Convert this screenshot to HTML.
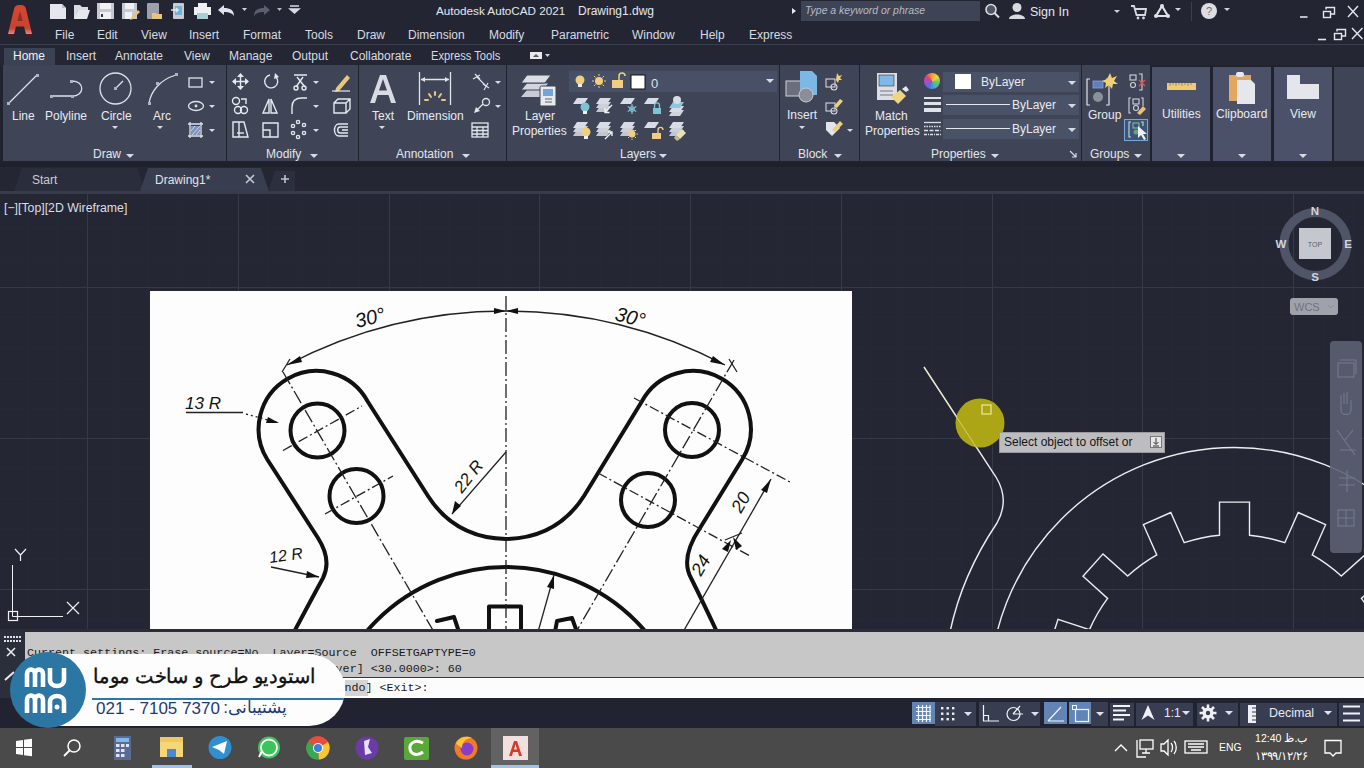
<!DOCTYPE html>
<html><head><meta charset="utf-8">
<style>
*{margin:0;padding:0;box-sizing:border-box}
html,body{width:1364px;height:768px;overflow:hidden;background:#242733;font-family:"Liberation Sans",sans-serif;color:#e6e8ee}
.a{position:absolute}
.t{position:absolute;white-space:pre;line-height:1}
#title{left:0;top:0;width:1364px;height:45px;background:#232632}
#tabs{left:0;top:45px;width:1364px;height:20px;background:#242733}
#ribbon{left:0;top:65px;width:1364px;height:98px;background:#20232d}
.pn{position:absolute;top:65px;height:96px;background:#3f4557}
.pl{position:absolute;top:148px;font-size:12px;color:#e2e5ec}
#ftabs{left:0;top:163px;width:1364px;height:31px;background:#242733;border-top:4px solid #1e212b}
#draw{left:0;top:194px;width:1364px;height:438px;background:#242733}
#cmd{left:0;top:629px;width:1364px;height:69px;background:#1e212b}
#status{left:0;top:698px;width:1364px;height:30px;background:#212430}
#taskbar{left:0;top:728px;width:1364px;height:40px;background:#4a4a4a}
.menu{top:29px;font-size:12px;color:#d8dbe2}
.rt{top:50px;font-size:12px;color:#d8dbe2}
.mono{font-family:"Liberation Mono",monospace;font-size:11.7px;color:#1a1a1a}
</style></head><body>
<div id="title" class="a"></div>
<div id="tabs" class="a"></div>
<div id="ribbon" class="a"></div>
<div id="ftabs" class="a"></div>
<div id="draw" class="a"></div>
<div id="cmd" class="a"></div>
<div id="status" class="a"></div>
<div id="taskbar" class="a"></div>
<!-- TITLE BAR -->
<svg class="a" style="left:0;top:0" width="40" height="44" viewBox="0 0 40 44">
<defs><linearGradient id="ag" x1="0" y1="0" x2="0" y2="1"><stop offset="0" stop-color="#d8452f"/><stop offset="0.8" stop-color="#c9432f"/><stop offset="1" stop-color="#e08a88"/></linearGradient></defs>
<path d="M14 9 Q15 5 19 5 H21 Q25 5 26 9 L32 34 H26 L24 26.5 H16 L14 34 H8 Z" fill="url(#ag)"/><path d="M17.3 21 H22.7 L20 11 Z" fill="#8a3026"/><path d="M8 34 H14 L13.5 37 H8.5 Z M26 34 H32 L31.5 37 H26.5 Z" fill="#4a1c22"/>
</svg>
<svg class="a" style="left:48;top:0;left:48px" width="260" height="22" viewBox="48 0 260 22">
<!-- new -->
<path d="M50 4 H62 L66 8 V19 H50 Z" fill="#e6e7ee"/><path d="M62 4 V8 H66" fill="#b9bccb"/>
<!-- open -->
<path d="M74 5 H80 L82 7 H88 V10 H78 L75 19 H74 Z" fill="#d9dbe4"/><path d="M78 10 H90 L87 19 H74 Z" fill="#e8e9ef"/>
<!-- save -->
<rect x="97" y="3" width="17" height="16" fill="#c7c9d2"/><rect x="100" y="3" width="11" height="6" fill="#f0f1f5"/><rect x="100" y="12" width="11" height="7" fill="#f0f1f5"/><rect x="101" y="14" width="2" height="3" fill="#333"/>
<!-- saveas -->
<rect x="122" y="3" width="15" height="16" fill="#c7c9d2"/><rect x="125" y="3" width="9" height="6" fill="#f0f1f5"/><rect x="125" y="12" width="7" height="7" fill="#f0f1f5"/><path d="M131 18 L138 10 L140 12 L133 19 L130 20 Z" fill="#e8c27a"/>
<!-- sheet open -->
<rect x="147" y="3" width="12" height="16" rx="1" fill="#9da0ab"/><path d="M152 13 H156 L157 14 H162 V19 H152 Z" fill="#e8c57a"/>
<!-- publish -->
<rect x="173" y="3" width="11" height="16" rx="1" fill="#c9cbd4"/><rect x="175" y="6" width="7" height="9" fill="#6fb4d6"/><path d="M171 10 H178 M176 8 L178 10 L176 12" stroke="#e0e6ee" stroke-width="1.5" fill="none"/>
<!-- plot -->
<rect x="198" y="3" width="9" height="5" fill="#eef0f4"/><rect x="194" y="7" width="17" height="8" fill="#eef0f4"/><rect x="197" y="13" width="11" height="6" fill="#a9cfd6"/>
<!-- undo -->
<path d="M218 10 L224 5 V8 C230 8 234 10 234 16 C232 13 229 12 224 12 V15 Z" fill="#e2e4ec"/>
<path d="M242 8 H247 L244.5 11 Z" fill="#d0d3dc"/>
<path d="M270 10 L264 5 V8 C258 8 254 10 254 16 C256 13 259 12 264 12 V15 Z" fill="#5a5f6e"/>
<path d="M277 8 H282 L279.5 11 Z" fill="#b4b7c2"/>
<path d="M290 6 H299 M290 9 H299 L294.5 13 Z" stroke="#d8dbe2" stroke-width="1.5" fill="#d8dbe2"/>
</svg>
<div class="t" style="left:436px;top:5px;font-size:11.7px;color:#e4e6ec">Autodesk AutoCAD 2021</div><div class="t" style="left:578px;top:5px;font-size:12px;color:#e4e6ec">Drawing1.dwg</div>
<svg class="a" style="left:790px;top:6px" width="8" height="10"><path d="M2 2 L6 5 L2 8 Z" fill="#e8eaef"/></svg>
<div class="a" style="left:801px;top:1px;width:179px;height:20px;background:#3e4456"></div>
<div class="t" style="left:805px;top:5px;font-size:11px;font-style:italic;color:#b6bac6;transform:scaleX(0.95);transform-origin:0 0">Type a keyword or phrase</div>
<svg class="a" style="left:982px;top:0" width="20" height="22"><circle cx="9" cy="9.5" r="5" stroke="#d9dce3" stroke-width="1.6" fill="#505565"/><path d="M12.5 13 L17 17.5" stroke="#d9dce3" stroke-width="2"/></svg>
<svg class="a" style="left:1006px;top:2px" width="22" height="18"><circle cx="11" cy="5.5" r="4.5" fill="#d9dbe2"/><path d="M3 17 C3 11 19 11 19 17 Z" fill="#d9dbe2"/></svg>
<div class="t" style="left:1030px;top:6px;font-size:12.5px;color:#e4e6ec">Sign In</div>
<svg class="a" style="left:1110px;top:6px" width="60" height="12"><path d="M4 4 H10 L7 7 Z" fill="#d0d3db"/></svg>
<svg class="a" style="left:1130px;top:2px" width="18" height="18"><path d="M1 4 H4 L6.5 13 H15 L16 7 H5" stroke="#d5d8df" stroke-width="1.8" fill="none"/><circle cx="8" cy="16" r="1.4" fill="#d5d8df"/><circle cx="13.5" cy="16" r="1.4" fill="#d5d8df"/></svg>
<svg class="a" style="left:1153px;top:3px" width="32" height="16"><path d="M9 3 L3 13 H15 Z" stroke="#e0e2e8" stroke-width="2.2" fill="none" stroke-linejoin="round"/><circle cx="9" cy="3" r="2" fill="#e0e2e8"/><circle cx="3" cy="13" r="2" fill="#e0e2e8"/><circle cx="15" cy="13" r="2" fill="#e0e2e8"/><path d="M22 5 H28 L25 8 Z" fill="#d0d3db"/></svg>
<div class="a" style="left:1191px;top:2px;width:1px;height:19px;background:#3b3f4c"></div>
<svg class="a" style="left:1199px;top:2px" width="34" height="18"><circle cx="10" cy="9" r="8" fill="#dcdee5"/><text x="10" y="13" font-size="11" text-anchor="middle" fill="#6a6e7a" font-family="Liberation Sans">?</text><path d="M25 6 H31 L28 9 Z" fill="#d0d3db"/></svg>
<svg class="a" style="left:1296px;top:0" width="68" height="45" fill="none" stroke="#e4e6ec" stroke-width="1.4">
<path d="M4 17 H11.5" stroke-width="1.6"/>
<rect x="27.5" y="11.5" width="7" height="6"/><path d="M30 9.5 V7.5 H38.5 V14 H35"/>
<path d="M52 6 L62 17 M62 6 L52 17"/>
<path d="M22 39.5 H30" stroke-width="1.6"/>
<rect x="38.5" y="33.5" width="7" height="6"/><path d="M41 31.5 V29.5 H49.5 V36 H46"/>
<path d="M56 28 L66.5 39 M66.5 28 L56 39"/>
</svg>
<!-- MENU -->
<div class="t menu" style="left:55px">File</div>
<div class="t menu" style="left:97px">Edit</div>
<div class="t menu" style="left:141px">View</div>
<div class="t menu" style="left:189px">Insert</div>
<div class="t menu" style="left:243px">Format</div>
<div class="t menu" style="left:305px">Tools</div>
<div class="t menu" style="left:357px">Draw</div>
<div class="t menu" style="left:408px">Dimension</div>
<div class="t menu" style="left:489px">Modify</div>
<div class="t menu" style="left:551px">Parametric</div>
<div class="t menu" style="left:632px">Window</div>
<div class="t menu" style="left:700px">Help</div>
<div class="t menu" style="left:749px">Express</div>
<div class="a" style="left:0;top:44px;width:1364px;height:1px;background:#3a3f4d"></div>
<!-- RIBBON TABS -->
<div class="a" style="left:4px;top:48px;width:51px;height:17px;background:#3b4254"></div>
<div class="t rt" style="left:13px;color:#f2f3f6">Home</div>
<div class="t rt" style="left:66px">Insert</div>
<div class="t rt" style="left:115px">Annotate</div>
<div class="t rt" style="left:184px">View</div>
<div class="t rt" style="left:229px">Manage</div>
<div class="t rt" style="left:292px">Output</div>
<div class="t rt" style="left:350px">Collaborate</div>
<div class="t rt" style="left:431px;transform:scaleX(0.93);transform-origin:0 0">Express Tools</div>
<svg class="a" style="left:528px;top:50px" width="30" height="12"><rect x="2" y="2" width="12" height="7" fill="#e8e9ee"/><path d="M5 7 L8 4 L11 7 Z" fill="#555"/><path d="M17 4 H22 L19.5 7 Z" fill="#d0d3db"/></svg>
<!-- RIBBON PANELS -->
<div class="pn" style="left:3px;width:223px"></div>
<div class="pn" style="left:227px;width:131px"></div>
<div class="pn" style="left:359px;width:147px"></div>
<div class="pn" style="left:507px;width:272px"></div>
<div class="pn" style="left:780px;width:79px"></div>
<div class="pn" style="left:860px;width:221px"></div>
<div class="pn" style="left:1082px;width:68px"></div>
<div class="pn" style="left:1152px;width:58px;top:67px;height:94px;background:#4a5168"></div>
<div class="pn" style="left:1213px;width:58px;top:67px;height:94px;background:#4a5168"></div>
<div class="pn" style="left:1274px;width:58px;top:67px;height:94px;background:#4a5168"></div>
<div class="pn" style="left:1334px;width:30px;top:67px;height:94px;background:#3f4557"></div>
<div class="t pl" style="left:93px">Draw</div>
<div class="t pl" style="left:266px">Modify</div>
<div class="t pl" style="left:396px">Annotation</div>
<div class="t pl" style="left:620px">Layers</div>
<div class="t pl" style="left:798px">Block</div>
<div class="t pl" style="left:931px">Properties</div>
<div class="t pl" style="left:1090px">Groups</div>
<svg class="a" style="left:0;top:65px" width="1364" height="98" viewBox="0 65 1364 98">
<g fill="#d8dbe3">
<path d="M126 154 H134 L130 158 Z"/><path d="M310 154 H318 L314 158 Z"/><path d="M462 154 H470 L466 158 Z"/><path d="M659 154 H667 L663 158 Z"/><path d="M834 154 H842 L838 158 Z"/><path d="M991 154 H999 L995 158 Z"/><path d="M1134 154 H1142 L1138 158 Z"/>
<path d="M1070 151 L1076 157 M1076 153 V157 H1072" stroke="#d8dbe3" stroke-width="1.2" fill="none"/>
<!-- small dropdown arrows -->
<path d="M112 126 H118 L115 129 Z"/><path d="M157 126 H163 L160 129 Z"/>
<path d="M209 81 H215 L212 84 Z"/><path d="M209 105 H215 L212 108 Z"/><path d="M209 129 H215 L212 132 Z"/>
<path d="M313 81 H319 L316 84 Z"/><path d="M313 105 H319 L316 108 Z"/><path d="M313 129 H319 L316 132 Z"/>
<path d="M379 126 H385 L382 129 Z"/>
<path d="M495 81 H501 L498 84 Z"/><path d="M495 105 H501 L498 108 Z"/>
<path d="M799 126 H805 L802 129 Z"/><path d="M847 129 H853 L850 132 Z"/>
<path d="M1177 154 H1185 L1181 158 Z"/><path d="M1238 154 H1246 L1242 158 Z"/><path d="M1299 154 H1307 L1303 158 Z"/>
</g>
<g fill="none" stroke="#dfe2ea" stroke-width="1.3">
<!-- Line -->
<path d="M9 103 L37 75"/>
<!-- Polyline -->
<path d="M52 96 H72 M72 96 C85 96 85 81 72 81"/>
<!-- Circle -->
<circle cx="115.5" cy="88.5" r="15.5"/><path d="M115 89 L123 81"/>
<!-- Arc -->
<path d="M149 103 C151 92 159 80 176 75"/>
<!-- rect -->
<rect x="189" y="78" width="13" height="9"/>
<!-- ellipse -->
<ellipse cx="196" cy="106" rx="7.5" ry="4.5"/><circle cx="196" cy="106" r="0.8"/>
<!-- hatch -->
<path d="M188 124 H203 M188 136 H203 M190 122 V138 M201 122 V138"/>
</g>
<g fill="#a9b4cc">
<rect x="7" y="102" width="3" height="3"/><rect x="36" y="74" width="3" height="3"/>
<rect x="50" y="95" width="3" height="3"/><rect x="71" y="95" width="3" height="3"/><rect x="70" y="80" width="3" height="3"/>
<rect x="114" y="87" width="3" height="3"/>
<rect x="148" y="102" width="3" height="3"/><rect x="156" y="82" width="3" height="3"/><rect x="175" y="73" width="3" height="3"/>
<rect x="191" y="126" width="9" height="9" fill="#7d93bb"/><path d="M191 131 L195 126 M192 135 L200 126 M196 135 L200 130" stroke="#c8d4ea" stroke-width="1"/>
</g>
<!-- Modify icons -->
<g fill="none" stroke="#e6e8ef" stroke-width="1.4">
<path d="M240.5 74 V89 M233 81.5 H248"/>
<path d="M276 77 A6.5 6.5 0 1 1 270 75"/>
<path d="M294 75 H307 M297 77 L305 87 M303 77 L296 87"/><circle cx="296" cy="88" r="2"/><circle cx="304" cy="88" r="2"/>
<circle cx="236" cy="101" r="3.5"/><circle cx="238" cy="110" r="3.5"/><circle cx="244" cy="110" r="3.5"/><path d="M241 99 H246 V104"/>
<path d="M269 99 L263 113 H269 Z M271 99 L277 113 H271 Z"/>
<path d="M292 114 V107 C292 101 296 98 302 98 H307"/>
<path d="M334 103 H346 V113 H334 Z M334 103 L338 99 H350 V109 L346 113 M346 103 L350 99"/>
<path d="M233 122 H239 V137 H233 Z M239 122 H244 L248 137 H239"/><path d="M237 133 H244"/>
<path d="M263 123 H278 V137 H263 Z M263 130 H270 V137"/>
<circle cx="298" cy="122" r="1.6"/><circle cx="304" cy="125" r="1.6"/><circle cx="293" cy="126" r="1.6"/><circle cx="304" cy="133" r="1.6"/><circle cx="293" cy="133" r="1.6"/><circle cx="298" cy="137" r="1.6"/>
<path d="M348 124 H339 C333 124 333 136 339 136 H348 M348 127 H340 C337 127 337 133 340 133 H348 M348 130 H342"/>
</g>
<path d="M240.5 73 L237 77 H244 Z M240.5 90 L237 86 H244 Z M232 81.5 L236 78 V85 Z M249 81.5 L245 78 V85 Z" fill="#e6e8ef"/>
<path d="M275 73 L279 77 L274 79 Z" fill="#e6e8ef"/>
<path d="M336 88 L347 75 L350 78 L339 91 L335 92 Z" fill="#e8c87a"/><path d="M332 91 H350" stroke="#e6e8ef" stroke-width="1.2"/>
<!-- Annotation -->
<path d="M370 103 L380 75 H386 L396 103 H391 L388.5 95 H377.5 L375 103 Z M379 90.5 H387 L383 79 Z" fill="#d9dbe4"/>
<g stroke="#e2e5ec" stroke-width="1.3" fill="none"><path d="M419.5 72 V105 M450.5 72 V105 M421 79.5 H449"/>
<path d="M475 74 L480 79 M473 79 L480 75 M477 77 L486 86 M483 84 L489 88 M484 90 L488 83" stroke-width="1.1"/>
<circle cx="486" cy="102" r="3.5"/><path d="M483 104 L476 111"/>
<rect x="472" y="123" width="16" height="14"/><path d="M472 127 H488 M472 130.5 H488 M472 134 H488 M477 127 V137 M483 127 V137"/></g>
<path d="M421 79.5 L425 77 V82 Z M449 79.5 L445 77 V82 Z" fill="#e2e5ec"/><path d="M474 113 L476 107 L480 111 Z" fill="#e2e5ec"/>
<g stroke="#e8c87a" stroke-width="2" stroke-linecap="round"><path d="M435 92 V95 M429 94 L431 97 M441 94 L439 97 M425 100 H428 M445 100 H442"/></g>
<!-- Layers -->

<path d="M527 90 H549 L543 97 H521 Z" fill="#c9ccd6"/><path d="M527 83 H549 L543 90 H521 Z" fill="#d2d5de" stroke="#3f4557" stroke-width="1"/><path d="M527 75 H551 L545 83 H521 Z" fill="#dcdee6" stroke="#3f4557" stroke-width="1"/>
<rect x="540" y="86" width="16" height="20" rx="1.5" fill="#e8e9ee" stroke="#3f4557" stroke-width="1"/><rect x="543" y="89" width="10" height="7" fill="#6fa8d8"/><path d="M545 99 H552 M545 102 H552" stroke="#555" stroke-width="0.9"/>
<rect x="569" y="71" width="208" height="21" fill="#475066"/>
<circle cx="580" cy="80" r="4.5" fill="#f0cf80"/><rect x="578" y="84" width="4" height="3" fill="#eee"/>
<circle cx="599" cy="81" r="4" fill="#f0cf80"/><g stroke="#f0cf80" stroke-width="1"><path d="M599 74 V76 M599 86 V88 M592 81 H594 M604 81 H606 M594 76 L595.5 77.5 M604 76 L602.5 77.5 M594 86 L595.5 84.5 M604 86 L602.5 84.5"/></g>
<rect x="612" y="80" width="11" height="8" fill="#f0cf80"/><path d="M619 80 V76 C619 72 625 72 625 76" stroke="#f0cf80" stroke-width="1.5" fill="none"/>
<rect x="631" y="75" width="14" height="14" fill="#fff" stroke="#111" stroke-width="1"/>
<text x="651" y="87.5" font-size="13" fill="#dfe2ea" font-family="Liberation Sans">0</text>
<path d="M766 79 H774 L770 83 Z" fill="#d8dbe3"/>
<path d="M577 98 H588 L584 104 H573 Z" fill="#d9dce6"/>
<circle cx="585" cy="107" r="4.5" fill="#7cc4d4"/><rect x="583" y="111" width="4" height="3" fill="#eef0f4"/>
<path d="M600 106 H611 L607 112 H596 Z" fill="#c3c6d0"/><path d="M600 102 H611 L607 108 H596 Z" fill="#cdd0da"/><path d="M600 98 H611 L607 104 H596 Z" fill="#d9dce6"/>
<path d="M612 105 L605 112 M605 108 V112.5 H609.5" stroke="#eef0f4" stroke-width="1.4" fill="none"/>
<path d="M624 98 H635 L631 104 H620 Z" fill="#d9dce6"/>
<g stroke="#7cc4d4" stroke-width="1.2"><path d="M632 104 V114 M627.7 106.5 L636.3 111.5 M636.3 106.5 L627.7 111.5"/></g><circle cx="632" cy="109" r="2.5" fill="none" stroke="#7cc4d4" stroke-width="1"/>
<path d="M648 98 H659 L655 104 H644 Z" fill="#d9dce6"/>
<rect x="653" y="108" width="8" height="6" fill="#7cc4d4"/><path d="M654.5 108 V105.5 C654.5 102 659.5 102 659.5 105.5 V108" stroke="#7cc4d4" stroke-width="1.3" fill="none"/>
<path d="M673 110 H684 L680 116 H669 Z" fill="#d0d3dc"/><path d="M673 106 H684 L680 112 H669 Z" fill="#d9dce6"/><path d="M673 102 H684 L680 108 H669 Z" fill="#8cc8dc"/>
<circle cx="677" cy="100" r="4" fill="#d9dce6"/>
<path d="M577 130 H588 L584 136 H573 Z" fill="#c3c6d0"/><path d="M577 126 H588 L584 132 H573 Z" fill="#cdd0da"/><path d="M577 122 H588 L584 128 H573 Z" fill="#d9dce6"/>
<circle cx="586" cy="132" r="4.5" fill="#f0cf80"/><rect x="584" y="136" width="4" height="3" fill="#eef0f4"/>
<path d="M600 130 H611 L607 136 H596 Z" fill="#c3c6d0"/><path d="M600 126 H611 L607 132 H596 Z" fill="#cdd0da"/><path d="M600 122 H611 L607 128 H596 Z" fill="#d9dce6"/>
<path d="M605 139 L612 132 M608 132 H612 V136" stroke="#eef0f4" stroke-width="1.4" fill="none"/>
<path d="M624 130 H635 L631 136 H620 Z" fill="#c3c6d0"/><path d="M624 126 H635 L631 132 H620 Z" fill="#cdd0da"/><path d="M624 122 H635 L631 128 H620 Z" fill="#d9dce6"/>
<circle cx="632" cy="134" r="3.5" fill="#f0cf80"/><g stroke="#f0cf80" stroke-width="1"><path d="M632 128 V129.5 M632 138.5 V140 M626 134 H627.5 M636.5 134 H638 M628 130 L629 131 M636 130 L635 131 M628 138 L629 137 M636 138 L635 137"/></g>
<path d="M648 122 H659 L655 128 H644 Z" fill="#d9dce6"/>
<rect x="652" y="133" width="9" height="6" fill="#f0cf80"/><path d="M658 133 V130 C658 126.5 663 126.5 663 130" stroke="#f0cf80" stroke-width="1.3" fill="none"/>
<path d="M673 130 H684 L680 136 H669 Z" fill="#c3c6d0"/><path d="M673 126 H684 L680 132 H669 Z" fill="#cdd0da"/><path d="M673 122 H684 L680 128 H669 Z" fill="#d9dce6"/>
<path d="M676 135 L682 129 L686 133 L680 139 Z" fill="#e8e0b8"/><path d="M676 135 L680 139 L677 141 L674 138 Z" fill="#c8b888"/>
<!-- Block -->
<rect x="786" y="81" width="21" height="15" fill="#6b6f7c" stroke="#d0d3dc" stroke-width="1"/>
<path d="M800 71 H812 L817 76 V95 H800 Z" fill="#7cb8e6"/>
<circle cx="806" cy="95" r="7" fill="#8a8e9a" stroke="#c8cbd4" stroke-width="1"/>
<g fill="none" stroke="#d2d5de" stroke-width="1.1"><rect x="826" y="79" width="9" height="8"/><circle cx="834" cy="87" r="3"/>
<rect x="826" y="103" width="9" height="8"/><circle cx="834" cy="111" r="3"/></g>
<path d="M837 73 L839 76 L842 75 L840 78 L842 80 L839 80 L838 83 L836 80 Z" fill="#f0d070"/>
<path d="M834 106 L840 99 L843 101 L837 108 Z" fill="#f0d070"/>
<path d="M826 122 H834 L840 128 L832 136 L826 130 Z" fill="#e2e4ea"/><path d="M832 130 L840 121 L843 124 L835 132 Z" fill="#f0d070"/>
<!-- Match properties -->
<rect x="877" y="73" width="20" height="27" fill="#dcdee6"/><rect x="879" y="75" width="15" height="11" fill="#7db8e8" stroke="#333" stroke-width="0.6"/>
<path d="M880 91 H893 M880 95 H893" stroke="#777" stroke-width="1"/>
<path d="M891 97 L900 90 L906 96 L898 104 Z" fill="#f0d480"/><path d="M902 89 L906 86 L909 90 L906 92 Z" fill="#e8e9ee"/>

<g fill="#e0e2ea"><rect x="924" y="97" width="17" height="2"/><rect x="924" y="102" width="17" height="3"/><rect x="924" y="108" width="17" height="4"/></g>
<g stroke="#e0e2ea" stroke-width="1.3"><path d="M924 122.5 H941"/><path d="M924 126.5 H941" stroke-dasharray="1.5 1"/><path d="M924 130.5 H941" stroke-dasharray="4 1.5"/><path d="M924 134.5 H941" stroke-dasharray="3 1 1 1"/></g>
<rect x="943" y="72" width="136" height="20" fill="#4a5268"/>
<rect x="943" y="95" width="136" height="20" fill="#4a5268"/>
<rect x="943" y="119" width="136" height="20" fill="#4a5268"/>
<rect x="955" y="74" width="16" height="15" fill="#fff"/>
<path d="M946 104.5 H1010 M946 128.5 H1010" stroke="#e6e8ee" stroke-width="1.2"/>
<path d="M1068 81 H1076 L1072 85 Z M1068 104 H1076 L1072 108 Z M1068 128 H1076 L1072 132 Z" fill="#d8dbe3"/>
<!-- Groups -->
<path d="M1090 79 H1087 V105 H1090 M1106 79 H1109 V105 H1106" stroke="#e0e2ea" stroke-width="1.2" fill="none"/>
<rect x="1093" y="81" width="10" height="7" fill="#5e80c0" stroke="#8aa4d8" stroke-width="0.8"/><circle cx="1098" cy="97" r="5" fill="#8c909c"/>
<path d="M1110 73 L1112 78 L1117 76 L1114 81 L1118 84 L1113 84 L1112 89 L1109 85 L1105 88 L1106 83 L1102 81 L1107 79 Z" fill="#f0d070"/>
<g fill="none" stroke="#d0d3dc" stroke-width="1.1"><rect x="1130" y="75" width="6" height="5"/><circle cx="1133" cy="85" r="2.5"/><path d="M1139 74 H1142 V90 H1139"/>
<path d="M1131 98 H1129 V113 H1131"/><rect x="1133" y="99" width="6" height="5"/><circle cx="1136" cy="108" r="2.5"/><path d="M1141 98 H1143 V106"/></g>
<path d="M1139 80 L1145 86 M1145 80 L1139 86" stroke="#e05050" stroke-width="1.4"/>
<path d="M1137 113 L1143 106 L1146 109 L1140 115 Z" fill="#f0c070"/>
<rect x="1124.5" y="119.5" width="23" height="21" fill="#3d5575" stroke="#78a8d8" stroke-width="1"/>
<g fill="none" stroke="#d0d3dc" stroke-width="1.1"><path d="M1131 122 H1129 V137 H1131"/><path d="M1141 122 H1143 V126"/></g>
<rect x="1133" y="123" width="6" height="5" fill="none" stroke="#8ac0a0" stroke-width="1"/><circle cx="1136" cy="132" r="2.5" fill="#6aa080"/>
<path d="M1138 126 V138 L1141 135 L1144 140 L1146 139 L1143 134 H1147 Z" fill="#f0f0f4"/>
<!-- Utilities / Clipboard / View -->
<rect x="1167" y="83" width="29" height="7" fill="#eccb7a"/><path d="M1170 83 V86 M1173 83 V85 M1176 83 V86 M1179 83 V85 M1182 83 V86 M1185 83 V85 M1188 83 V86 M1191 83 V85" stroke="#9a7a30" stroke-width="0.8"/>
<rect x="1229" y="75" width="22" height="26" fill="#e0a860"/><rect x="1236" y="72" width="8" height="5" rx="2" fill="#e8e9ee"/>
<path d="M1237 80 H1251 L1255 84 V104 H1237 Z" fill="#e6e7ec"/>
<path d="M1287 75 H1300 V84 H1319 V99 H1287 Z" fill="#e4e6ec"/>
</svg>
<div class="t" style="left:12px;top:110px;font-size:12px;color:#e8eaf0">Line</div>
<div class="t" style="left:45px;top:110px;font-size:12px;color:#e8eaf0">Polyline</div>
<div class="t" style="left:101px;top:110px;font-size:12px;color:#e8eaf0">Circle</div>
<div class="t" style="left:153px;top:110px;font-size:12px;color:#e8eaf0">Arc</div>
<div class="t" style="left:372px;top:110px;font-size:12px;color:#e8eaf0">Text</div>
<div class="t" style="left:407px;top:110px;font-size:12px;color:#e8eaf0">Dimension</div>
<div class="t" style="left:525px;top:110px;font-size:12px;color:#e8eaf0">Layer</div>
<div class="t" style="left:512px;top:125px;font-size:12px;color:#e8eaf0">Properties</div>
<div class="t" style="left:787px;top:109px;font-size:12px;color:#e8eaf0">Insert</div>
<div class="a" style="left:924px;top:73px;width:16px;height:16px;border-radius:50%;background:conic-gradient(#f5a030,#f0d040,#70c850,#40b0d0,#5070e0,#a050d0,#e04070,#f5a030)"></div>
<div class="t" style="left:875px;top:110px;font-size:12px;color:#e8eaf0">Match</div>
<div class="t" style="left:865px;top:125px;font-size:12px;color:#e8eaf0">Properties</div>
<div class="t" style="left:981px;top:76px;font-size:12px;color:#e8eaf0">ByLayer</div>
<div class="t" style="left:1012px;top:99px;font-size:12px;color:#e8eaf0">ByLayer</div>
<div class="t" style="left:1012px;top:123px;font-size:12px;color:#e8eaf0">ByLayer</div>
<div class="t" style="left:1088px;top:109px;font-size:12px;color:#e8eaf0">Group</div>
<div class="t" style="left:1162px;top:108px;font-size:12px;color:#e8eaf0">Utilities</div>
<div class="t" style="left:1216px;top:108px;font-size:12px;color:#e8eaf0">Clipboard</div>
<div class="t" style="left:1290px;top:108px;font-size:12px;color:#e8eaf0">View</div>
<!-- FILE TABS -->
<svg class="a" style="left:0;top:163px" width="1364" height="32" viewBox="0 163 1364 32">
<path d="M14 191 L22 168 H137 L145 191 Z" fill="#2a2e3c"/>
<path d="M140 191 L148 168 H261 L269 191 Z" fill="#383d4f"/>
<path d="M268 191 L275 171 H295 L295 191 Z" fill="#2c303e"/>
<path d="M246 175 L254 183 M254 175 L246 183" stroke="#c8cbd4" stroke-width="1.6"/>
<path d="M285 175 V183 M281 179 H289" stroke="#c0c3cc" stroke-width="1.6"/>
<rect x="0" y="191" width="1364" height="3" fill="#383c4a"/>
</svg>
<div class="t" style="left:32px;top:174px;font-size:12px;color:#c9ccd4">Start</div>
<div class="t" style="left:155px;top:174px;font-size:12px;color:#e2e4ea">Drawing1*</div>
<!-- DRAWING AREA -->
<svg class="a" style="left:0;top:194px" width="1364" height="438" viewBox="0 194 1364 438">
<g stroke="#262935" stroke-width="1">
<path d="M27.5 194 V632 M57.5 194 V632 M117.5 194 V632 M148.5 194 V632 M178.5 194 V632 M208.5 194 V632 M268.5 194 V632 M298.5 194 V632 M328.5 194 V632 M359.5 194 V632 M419.5 194 V632 M449.5 194 V632 M479.5 194 V632 M509.5 194 V632 M570.5 194 V632 M600.5 194 V632 M630.5 194 V632 M660.5 194 V632 M720.5 194 V632 M750.5 194 V632 M781.5 194 V632 M811.5 194 V632 M871.5 194 V632 M901.5 194 V632 M931.5 194 V632 M961.5 194 V632 M1022.5 194 V632 M1052.5 194 V632 M1082.5 194 V632 M1112.5 194 V632 M1172.5 194 V632 M1202.5 194 V632 M1233.5 194 V632 M1263.5 194 V632 M1323.5 194 V632 M1353.5 194 V632"/>
<path d="M0 197.5 H1364 M0 227.5 H1364 M0 257.5 H1364 M0 317.5 H1364 M0 348.5 H1364 M0 378.5 H1364 M0 408.5 H1364 M0 468.5 H1364 M0 498.5 H1364 M0 528.5 H1364 M0 559.5 H1364 M0 619.5 H1364"/>
</g>
<g stroke="#363946" stroke-width="1">
<path d="M87.5 194 V632 M238.5 194 V632 M389.5 194 V632 M539.5 194 V632 M690.5 194 V632 M841.5 194 V632 M992.5 194 V632 M1142.5 194 V632 M1293.5 194 V632"/>
<path d="M0 287.5 H1364 M0 438.5 H1364 M0 589.5 H1364"/>
</g>
<!-- UCS -->
<g stroke="#eef0f4" stroke-width="1.2" fill="none"><path d="M12.5 565 V616.5 H63" stroke-width="1"/><rect x="8.5" y="611.5" width="9" height="9"/>
<path d="M15 549 L20.5 555 L26 549 M20.5 555 V561"/><path d="M67 602 L79 614 M79 602 L67 614"/></g>
<!-- gear & circle -->
<g stroke="#eceef2" stroke-width="1.4" fill="none">
<circle cx="1234.5" cy="692.5" r="245"/>
<path d="M1249.5 535.2 L1249.5 502.1 L1219.5 502.1 L1219.5 535.2 A158 158 0 0 0 1184.2 542.7 L1170.8 512.5 L1143.4 524.7 L1156.8 554.9 A158 158 0 0 0 1127.7 576.1 L1103.0 553.9 L1083.0 576.2 L1107.6 598.4 A158 158 0 0 0 1089.5 629.6 L1058.0 619.4 L1048.8 647.9 L1080.3 658.2 A158 158 0 0 0 1076.5 694.0 L1043.6 697.5 L1046.7 727.3 L1079.6 723.9 A158 158 0 0 0 1090.8 758.2 L1062.1 774.7 L1077.1 800.7 L1105.8 784.1 A158 158 0 0 0 1129.9 810.9 L1110.4 837.7 L1134.7 855.4 L1154.2 828.6 A158 158 0 0 0 1187.1 843.2 L1180.2 875.6 L1209.6 881.9 L1216.5 849.5 A158 158 0 0 0 1252.5 849.5 L1259.4 881.9 L1288.8 875.6 L1281.9 843.2 A158 158 0 0 0 1314.8 828.6 L1334.3 855.4 L1358.6 837.7 L1339.1 810.9 A158 158 0 0 0 1363.2 784.1 L1391.9 800.7 L1406.9 774.7 L1378.2 758.2 A158 158 0 0 0 1389.4 723.9 L1422.3 727.3 L1425.4 697.5 L1392.5 694.0 A158 158 0 0 0 1388.7 658.2 L1420.2 647.9 L1411.0 619.4 L1379.5 629.6 A158 158 0 0 0 1361.4 598.4 L1386.0 576.2 L1366.0 553.9 L1341.3 576.1 A158 158 0 0 0 1312.2 554.9 L1325.6 524.7 L1298.2 512.5 L1284.8 542.7 A158 158 0 0 0 1249.5 535.2 Z"/>
<path d="M924 367 L996 477 Q1010 500 997 523 Q962 575 950 632"/>
</g>
<!-- yellow pick circle -->
<circle cx="980" cy="423" r="24.5" fill="#aca516"/>
<path d="M924 367 L980 453" stroke="#e8e6a0" stroke-width="1.2" opacity="0.5"/>
<rect x="982" y="405" width="9" height="9" fill="none" stroke="#f0eaa0" stroke-width="1.2"/>
<!-- ViewCube -->
<circle cx="1315.5" cy="244" r="31.5" fill="none" stroke="#4f5467" stroke-width="9"/>
<rect x="1299" y="228" width="32" height="31" fill="#c5c7cf"/>
<text x="1315" y="247" font-size="7" text-anchor="middle" fill="#5a5d68" font-family="Liberation Sans">TOP</text>
<g font-size="11.5" font-weight="bold" fill="#d2d4dc" font-family="Liberation Sans" text-anchor="middle">
<text x="1315" y="215">N</text><text x="1315" y="281">S</text><text x="1281" y="248">W</text><text x="1348" y="248">E</text></g>
<rect x="1290" y="298" width="48" height="17" rx="3" fill="#a0a2ab"/>
<text x="1294" y="311" font-size="11" fill="#70727c" font-family="Liberation Sans">WCS</text><path d="M1328 305 L1331 308 L1334 305" stroke="#8a8c95" fill="none"/>
<!-- nav bar -->
<rect x="1330" y="341" width="32" height="212" rx="4" fill="#5c6172" fill-opacity="0.9"/>
<g stroke="#737990" stroke-width="1.1" fill="none">
<rect x="1338" y="363" width="16" height="14"/><path d="M1340 360 H1356 V374"/>
<path d="M1341 395 V410 C1341 416 1351 416 1351 410 V400 M1344 393 V404 M1347 392 V404"/>
<path d="M1337 430 L1355 455 M1345 440 L1353 430 M1340 450 H1356"/>
<path d="M1339 478 H1355 M1339 485 H1355 M1347 470 V492"/>
<rect x="1338" y="510" width="16" height="16"/><path d="M1338 518 H1354 M1346 510 V526"/>
</g>
</svg>
<!-- tooltip -->
<div class="a" style="left:999px;top:432px;width:166px;height:21px;background:#bdbdc0;border:1px solid #9a9a9e"></div>
<div class="t" style="left:1004px;top:436px;font-size:12px;color:#161616">Select object to offset or</div>
<svg class="a" style="left:1150px;top:436px" width="12" height="12"><rect x="0.5" y="0.5" width="11" height="11" fill="#e8e8e8" stroke="#777"/><path d="M6 2 V8 M3.5 6 L6 8.5 L8.5 6 M3 10 H9" stroke="#333" stroke-width="1" fill="none"/></svg>
<div class="t" style="left:4px;top:202px;font-size:12.3px;color:#dcdee6">[−][Top][2D Wireframe]</div>
<!-- TECHNICAL DRAWING IMAGE -->
<svg class="a" style="left:150px;top:291px" width="702" height="338" viewBox="150 291 702 338">
<rect x="150" y="291" width="702" height="338" fill="#fdfdfd"/>
<g fill="none" stroke="#111" stroke-width="4" stroke-linejoin="round" stroke-linecap="round">
<path d="M294 632 Q311 600 323 578 Q332 560 318 538 L267.3 459.5 A58 58 0 1 1 367.7 401.5 L428 496 Q455 538 506 539 Q557 538 584 496 L641.8 401.5 A58 58 0 1 1 742.2 459.5 L700 528 Q680 558 691 578 Q702 600 717 632"/>
<circle cx="317.5" cy="430.5" r="27"/>
<circle cx="356.5" cy="496" r="27"/>
<circle cx="692" cy="430" r="27"/>
<circle cx="648" cy="500" r="27"/>
<circle cx="506" cy="750" r="183"/>
<path d="M489 632 V606.5 H521 V632"/>
<path d="M437 621 L454 617 L459 632 M555 632 L557 621 L572 618 L577 632"/>
</g>
<g fill="none" stroke="#222" stroke-width="1.3">
<path d="M506 296 V632" stroke-dasharray="14 3 2 3"/>
<path d="M283 372 L434 632" stroke-dasharray="14 3 2 3"/>
<path d="M734 360 L576 632" stroke-dasharray="14 3 2 3"/>
<path d="M283 450.5 L362 406" stroke-dasharray="10 3 2 3"/>
<path d="M325 514 L393 476" stroke-dasharray="10 3 2 3"/>
<path d="M634 398 L790 482" stroke-dasharray="10 3 2 3"/>
<path d="M598 473 L750 556" stroke-dasharray="10 3 2 3"/>
<path d="M287 365 A471 471 0 0 1 725 365"/>
<path d="M186 412.5 H243"/>
<path d="M246 414 L279 423" stroke-dasharray="2 3"/>
<path d="M506 452 L452 514"/>
<path d="M271 567 L319 577"/>
<path d="M771 479 L683 632"/>
<path d="M538 632 L554 575"/>
<path d="M282 372 L290 359 M729 359 L737 372"/>
<path d="M725 540 L742 533"/>
</g>
<g fill="#111">
<path d="M287 365 L300 356 L302 362 Z"/>
<path d="M506 311 L494 308 L494 314 Z"/><path d="M506 311 L518 308 L518 314 Z"/>
<path d="M725 365 L710 362 L713 356 Z"/>
<path d="M279 423 L266 423 L268 417 Z"/>
<path d="M452 514 L455 501 L461 506 Z"/>
<path d="M319 577 L306 578 L307 571 Z"/>
<path d="M771 479 L761 490 L767 493 Z"/>
<path d="M733 537 L736 550 L742 546 Z"/>
<path d="M731 540 L722 549 L728 552 Z"/>
<path d="M554 575 L547 587 L554 589 Z"/>
</g>
<g font-family="Liberation Sans" font-style="italic" fill="#111">
<text x="357" y="328" font-size="20" transform="rotate(-14 357 328)">30°</text>
<text x="614" y="320" font-size="20" transform="rotate(14 614 320)">30°</text>
<text x="185" y="409" font-size="17" transform="scale(1 1)">13 R</text>
<text x="462" y="494" font-size="17" transform="rotate(-52 462 494)">22 R</text>
<text x="270" y="563" font-size="16" transform="rotate(-8 270 563)">12 R</text>
<text x="741" y="514" font-size="18" transform="rotate(-60 741 514)">20</text>
<text x="701" y="577" font-size="18" transform="rotate(-60 701 577)">24</text>
</g>
</svg>
<!-- COMMAND LINE -->
<div class="a" style="left:0;top:629px;width:1364px;height:3px;background:#2a2d38"></div>
<div class="a" style="left:0;top:632px;width:25px;height:66px;background:#2b2f3c"></div>
<div class="a" style="left:25px;top:632px;width:1339px;height:45px;background:#c7c7c7"></div>
<div class="a" style="left:25px;top:677px;width:1339px;height:1px;background:#3a3a3a"></div>
<div class="a" style="left:25px;top:678px;width:1339px;height:20px;background:#fcfcfc"></div>
<svg class="a" style="left:0;top:632px" width="25" height="66">
<g fill="#e0e2e8"><rect x="4" y="4" width="2" height="2"/><rect x="7" y="4" width="2" height="2"/><rect x="10" y="4" width="2" height="2"/><rect x="13" y="4" width="2" height="2"/><rect x="16" y="4" width="2" height="2"/><rect x="19" y="4" width="2" height="2"/>
<rect x="4" y="8" width="2" height="2"/><rect x="7" y="8" width="2" height="2"/><rect x="10" y="8" width="2" height="2"/><rect x="13" y="8" width="2" height="2"/><rect x="16" y="8" width="2" height="2"/><rect x="19" y="8" width="2" height="2"/></g>
<path d="M7 16 L15 24 M15 16 L7 24" stroke="#e8eaf0" stroke-width="1.6"/>
<path d="M5 48 L14 40" stroke="#e8eaf0" stroke-width="2"/>
</svg>
<div class="t mono" style="left:27px;top:648px">Current settings: Erase source=No  Layer=Source  OFFSETGAPTYPE=0</div>
<div class="t mono" style="left:27px;top:664px">Specify offset distance or [Through/Erase/Layer] &lt;30.0000&gt;: 60</div>
<div class="a" style="left:345px;top:680px;width:23px;height:16px;background:#d4d4d4"></div>
<div class="t mono" style="left:106px;top:683px">Select object to offset or [Exit/Undo] &lt;Exit&gt;:</div>
<!-- LOGO BANNER -->
<svg class="a" style="left:0;top:650px" width="350" height="80" viewBox="0 650 350 80">
<path d="M48 654 H309 A36 36 0 0 1 309 726 H48 Z" fill="#fdfdfd"/>
<path d="M92 699 H344" stroke="#2a78a8" stroke-width="2"/>
<circle cx="48" cy="690" r="38" fill="#2b76a3"/>
<g fill="none" stroke="#fff" stroke-width="4.6" stroke-linecap="butt">
<path d="M27 687 V674 C27 668 35 668 35 674 V687 M35 674 C35 668 43 668 43 674 V687"/>
<path d="M50 668 V680 C50 688 64 688 64 680 V668"/>
<path d="M27 713 V700 C27 694 35 694 35 700 V713 M35 700 C35 694 43 694 43 700 V713"/>
<path d="M50 713 V702 C50 694 64 694 64 702 V713"/>
</g>
<circle cx="57" cy="707" r="2.5" fill="#fff"/>
</svg>
<div class="t" style="left:86px;top:667px;font-size:19.6px;color:#111;direction:rtl;width:230px;text-align:right;transform:scaleX(0.975);transform-origin:230px 0;-webkit-text-stroke:0.35px #111">استودیو طرح و ساخت موما</div>
<div class="t" style="left:96px;top:700px;font-size:17px;color:#1d3a76">021 - 7105 7370</div><div class="t" dir="rtl" style="left:187px;width:100px;text-align:right;top:699px;font-size:17px;color:#1d3a76">پشتیبانی:</div>
<!-- STATUS BAR -->
<svg class="a" style="left:900px;top:698px" width="464" height="30" viewBox="900 698 464 30">
<g fill="#383d51">
<rect x="935" y="702" width="41" height="24"/>
<rect x="979" y="702" width="61" height="24"/>
<rect x="1091" y="702" width="17" height="24"/>
<rect x="1110" y="703" width="24" height="23"/>
<rect x="1136" y="703" width="57" height="23"/>
<rect x="1197" y="703" width="41" height="23"/>
<rect x="1240" y="703" width="97" height="23"/>
<rect x="1339" y="703" width="25" height="23"/>
</g>
<g fill="#6285b6"><rect x="912" y="702" width="23" height="22"/><rect x="1044" y="702" width="23" height="22"/><rect x="1069" y="702" width="22" height="22"/></g>
<g stroke="#f2f4f8" stroke-width="1.4" fill="none">
<path d="M916 707.5 H931 M916 711.5 H931 M916 715.5 H931 M916 719.5 H931 M918.5 705 V722 M922.5 705 V722 M926.5 705 V722 M930 705 V722" stroke-width="1.2"/>
<path d="M983.5 705 V721 H999 M983.5 715.5 H988.5 V721" stroke-width="1.2"/>
<circle cx="1013.5" cy="714" r="6.5" stroke-width="1.2"/><path d="M1013 714 H1023 M1013 714 L1020 706" stroke-width="1.2"/>
<path d="M1048 721 H1064 M1048 721 L1061 707" stroke-width="1.2"/>
<rect x="1075.5" y="709.5" width="13" height="12" stroke-width="1.2"/><rect x="1072.5" y="705.5" width="4" height="4" stroke-width="1"/>
<path d="M1113 706 H1130 M1113 710.5 H1126 M1113 715 H1130 M1113 719.5 H1124" stroke-width="2.2"/>
<path d="M1343 706.5 H1360 M1343 713.5 H1360 M1343 720.5 H1360" stroke-width="2"/>
</g>
<g fill="#eef0f4">
<rect x="941" y="707" width="2.4" height="2.4"/><rect x="946.5" y="707" width="2.4" height="2.4"/><rect x="952" y="707" width="2.4" height="2.4"/>
<rect x="941" y="712.5" width="2.4" height="2.4"/><rect x="946.5" y="712.5" width="2.4" height="2.4"/><rect x="952" y="712.5" width="2.4" height="2.4"/>
<rect x="941" y="718" width="2.4" height="2.4"/><rect x="946.5" y="718" width="2.4" height="2.4"/><rect x="952" y="718" width="2.4" height="2.4"/>
<path d="M1148 705 L1154.5 720 L1148 715.5 L1141.5 720 Z"/>
<rect x="1248" y="705" width="8" height="18"/>
</g>
<g fill="#dfe2ea"><path d="M964 712 H972 L968 716 Z M1031 712 H1039 L1035 716 Z M1096 712 H1104 L1100 716 Z M1182 711 H1190 L1186 715 Z M1225 711 H1233 L1229 715 Z M1324 711 H1332 L1328 715 Z"/></g>
<path d="M1208 704.5 V721.5 M1199.5 713 H1216.5 M1202 707 L1214 719 M1214 707 L1202 719" stroke="#eef0f4" stroke-width="2.6"/>
<circle cx="1208" cy="713" r="5.5" fill="#eef0f4"/><circle cx="1208" cy="713" r="2.2" fill="#383d51"/>
<path d="M1252 708 H1256 M1252 712 H1256 M1252 716 H1256 M1252 720 H1256" stroke="#383d51" stroke-width="1"/>
</svg>
<div class="t" style="left:1164px;top:707px;font-size:12px;color:#e8eaf0">1:1</div>
<div class="t" style="left:1269px;top:707px;font-size:12.5px;color:#e8eaf0">Decimal</div>
<!-- TASKBAR -->
<div class="a" style="left:491px;top:728px;width:48px;height:40px;background:#626262"></div>
<div class="a" style="left:152px;top:765px;width:40px;height:3px;background:#9ec3ea"></div>
<div class="a" style="left:491px;top:765px;width:48px;height:3px;background:#9ec3ea"></div>
<svg class="a" style="left:0;top:728px" width="1364" height="40" viewBox="0 728 1364 40">
<g fill="#fff"><path d="M16 741 L23 740 V747 H16 Z M24 739.8 L32 738.8 V747 H24 Z M16 748 H23 V755 L16 754 Z M24 748 H32 V756.2 L24 755.2 Z"/></g>
<circle cx="74" cy="746" r="6" fill="none" stroke="#fff" stroke-width="1.5"/><path d="M69.5 750.5 L64 756" stroke="#fff" stroke-width="1.8"/>
<rect x="114" y="736" width="17" height="24" fill="#5a6a92"/><rect x="116" y="738" width="13" height="4" fill="#7fb8e8"/>
<g fill="#e0e4f0"><rect x="116" y="744" width="3.5" height="3"/><rect x="121" y="744" width="3.5" height="3"/><rect x="126" y="744" width="3" height="3"/><rect x="116" y="749" width="3.5" height="3"/><rect x="121" y="749" width="3.5" height="3"/><rect x="116" y="754" width="3.5" height="3"/><rect x="121" y="754" width="3.5" height="3"/></g>
<rect x="160" y="737" width="23" height="20" fill="#f0c860"/><rect x="160" y="742" width="23" height="15" fill="#f5d77a"/><rect x="167" y="749" width="9" height="8" fill="#4a8ad0"/>
<circle cx="220" cy="747.5" r="11.5" fill="#2f8fd0"/><path d="M212 747 L227 741 L224 754 L219 750 Z" fill="#fff"/>
<circle cx="269" cy="747.5" r="11" fill="#3cc35a"/><circle cx="269" cy="747.5" r="8" fill="none" stroke="#fff" stroke-width="1.8"/><path d="M259 757 L262 751" stroke="#fff" stroke-width="2"/>
<circle cx="318" cy="748" r="11.5" fill="#e04434"/><path d="M318 748 L328 742 A11.5 11.5 0 0 0 308 742 Z" fill="#e84c3c"/><path d="M318 748 L308 742 A11.5 11.5 0 0 0 319 759.5 Z" fill="#38a852"/><path d="M318 748 L319 759.5 A11.5 11.5 0 0 0 328 742 Z" fill="#f8c830"/><circle cx="318" cy="748" r="5" fill="#fff"/><circle cx="318" cy="748" r="4" fill="#3a7ee0"/>
<circle cx="367" cy="748" r="11.5" fill="#6a3ca8"/><path d="M364 741 L370 739 L368 747 L372 753 L365 755 Z" fill="#e8e0f4"/>
<rect x="404" y="737" width="25" height="23" rx="2" fill="#5aa83a"/><path d="M423 743 C414 738 409 745 410 749 C411 755 418 756 423 752" stroke="#fff" stroke-width="3" fill="none"/>
<circle cx="466" cy="748" r="11.5" fill="#f07a28"/><circle cx="467" cy="749" r="6.5" fill="#8a3cc8"/><path d="M456 744 C458 738 466 735 472 738 C466 738 462 742 462 748 Z" fill="#f9c638"/>
<rect x="503" y="736" width="25" height="24" fill="#f2e0e0"/><path d="M509 756 L514 741 H517 L522 756 H519 L518 752 H513 L512 756 Z M514 749.5 H517 L515.5 744 Z" fill="#d83a2a"/>
<path d="M1115 751 L1121 745 L1127 751" stroke="#fff" stroke-width="1.4" fill="none"/>
<g stroke="#fff" stroke-width="1.3" fill="none"><rect x="1140" y="740" width="13" height="9"/><path d="M1137 740 V757 H1146 M1146 749 V753 M1142 753 H1150"/>
<path d="M1161 744 H1164 L1168 740 V755 L1164 751 H1161 Z M1171 743 C1173 745 1173 750 1171 752 M1174 741 C1177 744 1177 751 1174 754"/>
<rect x="1185" y="741" width="22" height="12"/><path d="M1188 744 H1204 M1188 747 H1204 M1191 750 H1201"/>
<path d="M1325 740.5 H1341 V753 H1336 L1333 756 L1330 753 H1325 Z"/></g>
</svg>
<div class="t" style="left:1219px;top:742px;font-size:11.5px;color:#fff;transform:scaleX(0.9);transform-origin:0 0">ENG</div>
<div class="t" style="left:1255px;top:733px;font-size:11.5px;color:#fff;transform:scaleX(0.92);transform-origin:0 0">12:40 ب.ظ</div>
<div class="t" style="left:1255px;top:751px;font-size:11.5px;color:#fff;transform:scaleX(0.97);transform-origin:0 0">۱۳۹۹/۱۲/۲۶</div>

</body></html>
